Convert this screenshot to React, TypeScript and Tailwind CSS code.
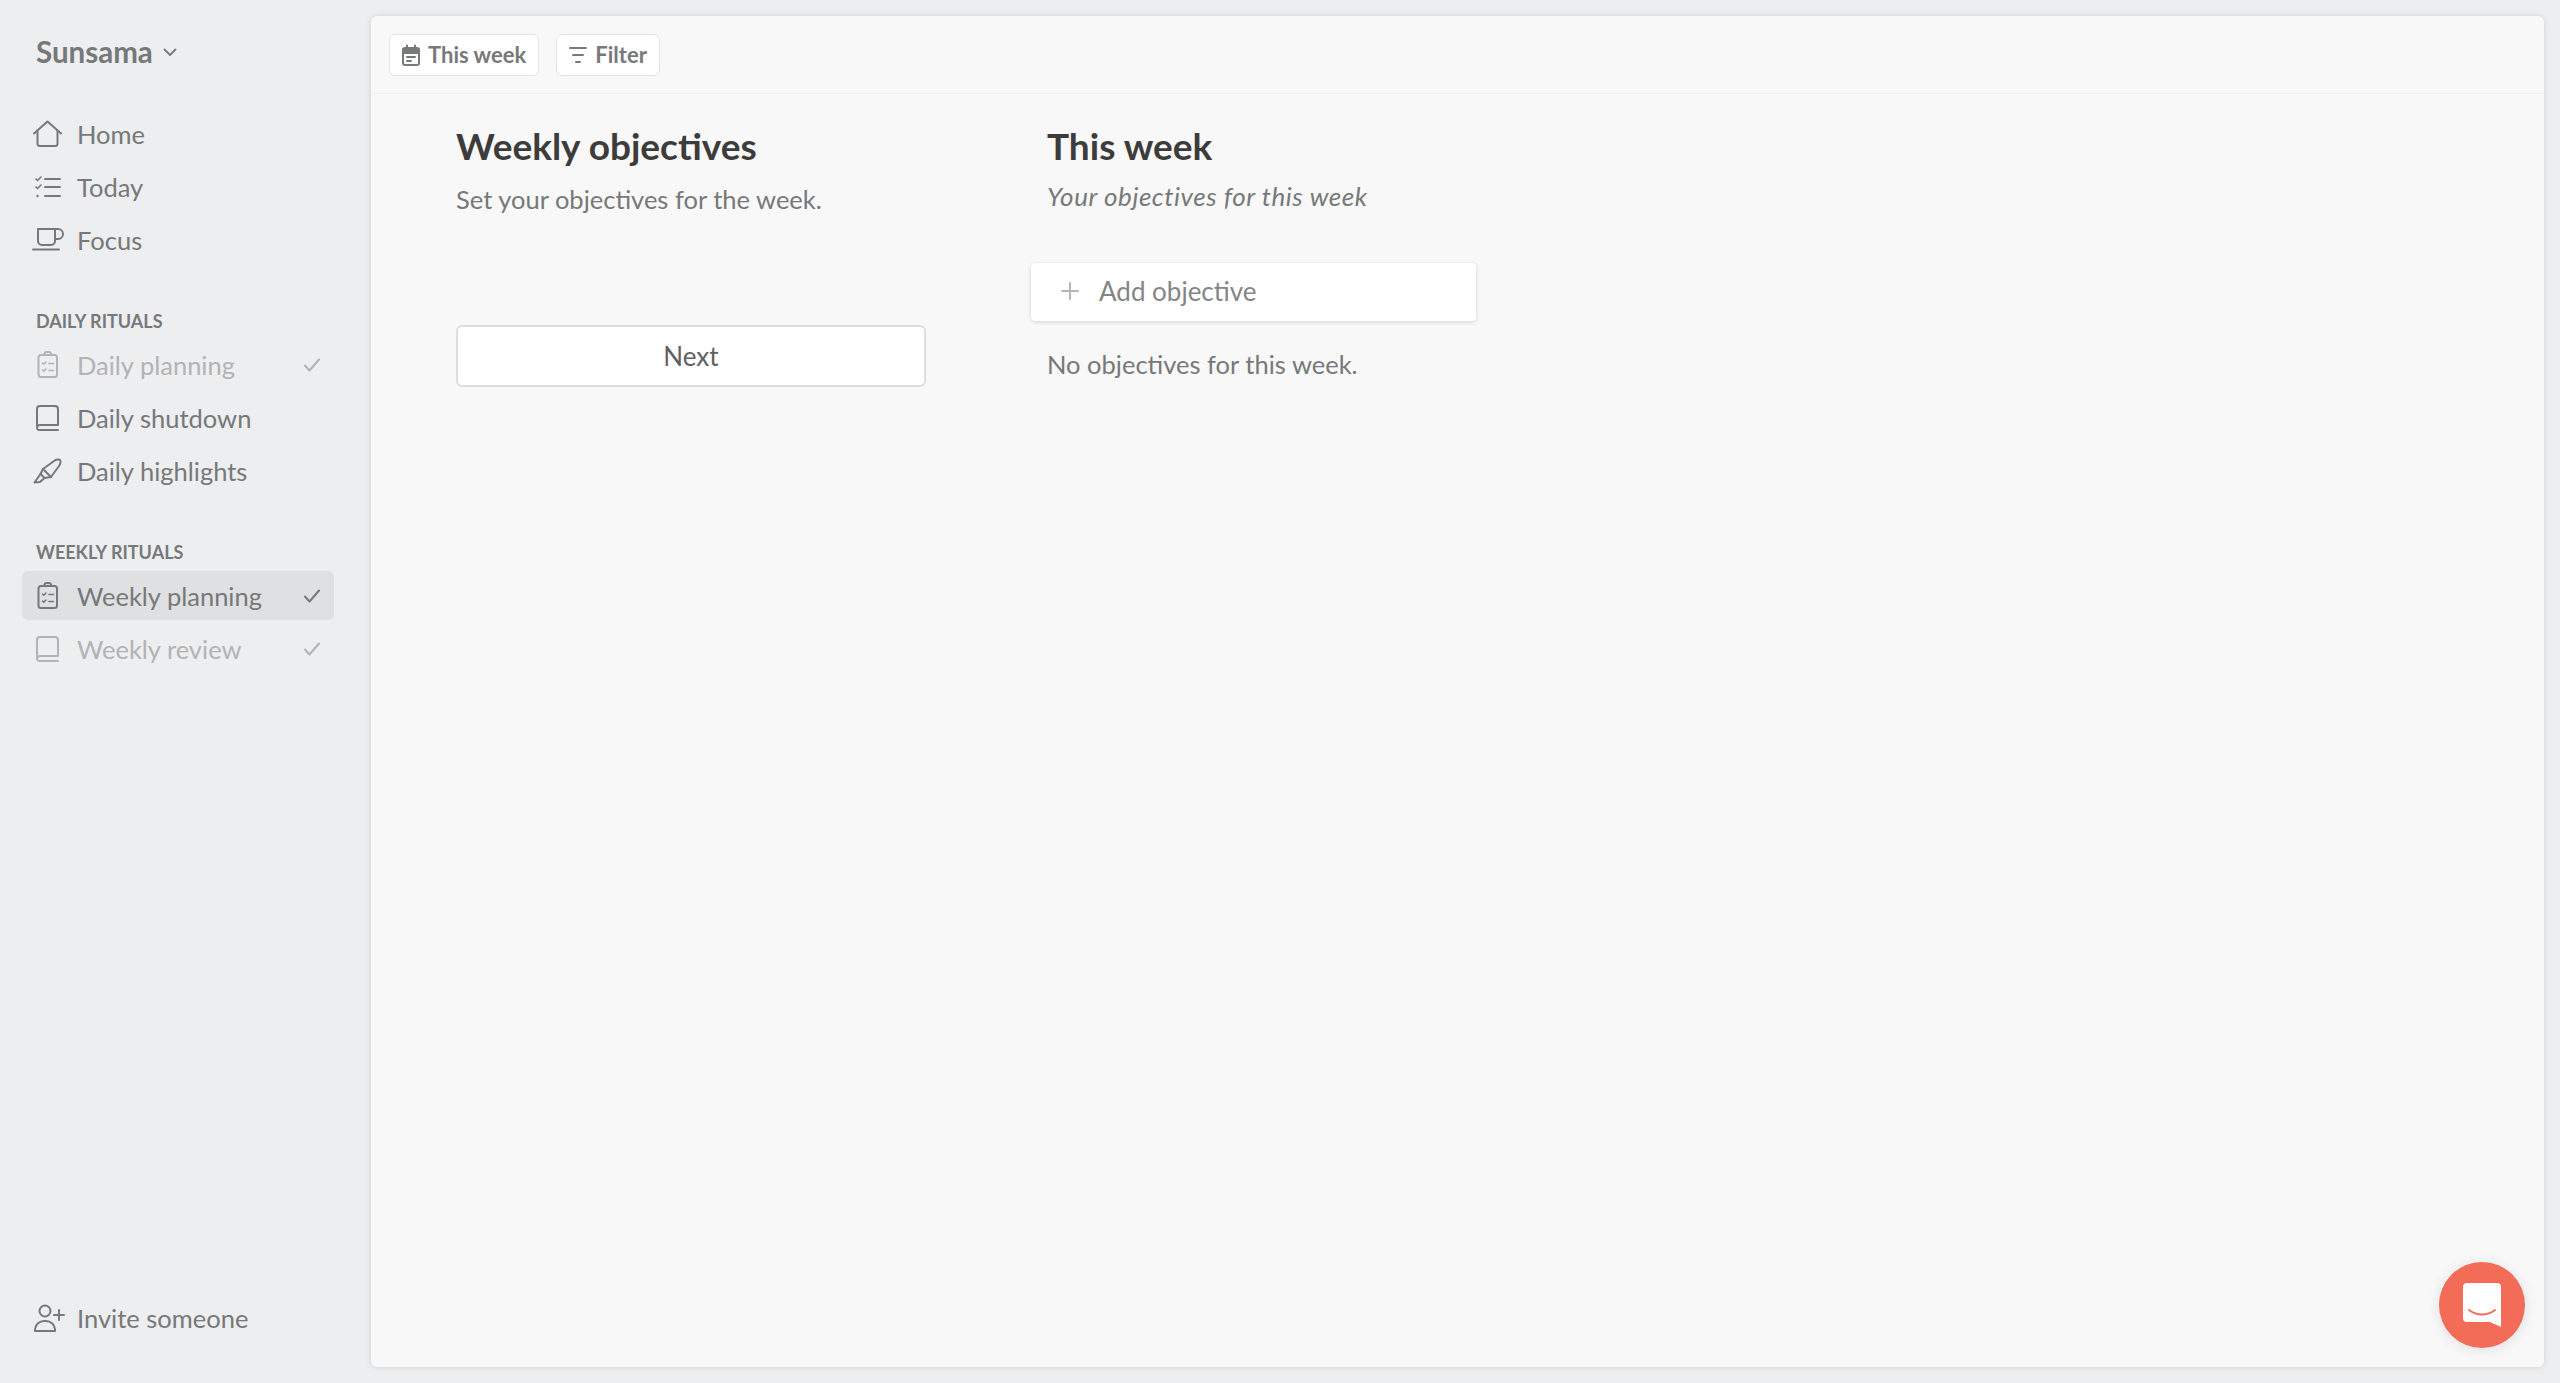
import { ReactNode } from "react";

const font = { fontFamily: '"Lato", "Open Sans", sans-serif' };

function Svg({ children, className = "h-[30px] w-[30px]" }: { children: ReactNode; className?: string }) {
  return (
    <svg
      viewBox="0 0 30 30"
      fill="none"
      stroke="currentColor"
      strokeWidth="2"
      strokeLinecap="round"
      strokeLinejoin="round"
      className={`shrink-0 overflow-visible ${className}`}
    >
      {children}
    </svg>
  );
}

const HomeIcon = () => (
  <Svg>
    <path d="M1 14.500 14.500 2.500 28 14.500" />
    <path d="M4.500 11.500v13a2.500 2.500 0 0 0 2.500 2.500h15a2.500 2.500 0 0 0 2.500-2.500v-13" />
  </Svg>
);

const TodayIcon = () => (
  <Svg>
    <path d="M3 7l1.500 1.500L8 5M3 15l1.500 1.500L8 13" strokeWidth="1.600" />
    <path d="M12 7h15M12 15h15M12 24h15" />
    <circle cx="4.500" cy="24" r="1.200" fill="currentColor" stroke="none" />
  </Svg>
);

const FocusIcon = () => (
  <Svg>
    <path d="M5 4h17v12a4 4 0 0 1-4 4H9a4 4 0 0 1-4-4z" />
    <path d="M22 4h3a4.500 4.500 0 0 1 0 10h-3" />
    <path d="M0 24.500h26" />
  </Svg>
);

const ClipboardIcon = () => (
  <Svg>
    <rect x="5.500" y="5" width="18.500" height="22" rx="2.500" />
    <path d="M11.500 5V3.500a2 2 0 0 1 2-1.500h2.500a2 2 0 0 1 2 1.500V5" />
    <path d="M9.500 13l1.300 1.300L13 12M9.500 20l1.300 1.300L13 19M16 13.500h4.500M16 20.500h4.500" strokeWidth="1.600" />
  </Svg>
);

const BookIcon = () => (
  <Svg>
    <path d="M4 23V6a3 3 0 0 1 3-3h15a3 3 0 0 1 3 3v16H7a3 3 0 0 0-3 2.500A2.500 2.500 0 0 0 7 27h18" />
  </Svg>
);

const MarkerIcon = () => (
  <Svg>
    <path d="M10 13 21 5c2-1.500 5-2 6-1s.5 4-1 6l-8 11z" />
    <path d="M10 13l-2.500 5 4 4 6.500-1" />
    <path d="M7.500 18 1.500 26.500l5.500-.5 4.500-4" />
  </Svg>
);

const Check = () => (
  <svg viewBox="0 0 16 14" fill="none" stroke="currentColor" strokeWidth="2" strokeLinecap="round" strokeLinejoin="round" className="h-[14px] w-[16px] shrink-0">
    <path d="M1 7.500 5.500 12.500 15 1.500" />
  </svg>
);

const InviteIcon = () => (
  <Svg className="h-[30px] w-[32px]">
    <circle cx="11" cy="8" r="5.500" />
    <path d="M1 28v-2a9 9 0 0 1 9-8h2a9 9 0 0 1 9 8v2z" />
    <path d="M25 7v10M20 12h10" />
  </Svg>
);

function NavItem({
  icon,
  label,
  done,
  faded,
  active,
}: {
  icon: ReactNode;
  label: string;
  done?: boolean;
  faded?: boolean;
  active?: boolean;
}) {
  return (
    <div
      className={`flex h-[49px] items-center rounded-[6px] pl-[11px] pr-[14px] ${active ? "bg-[#dfe0e1]" : ""} ${
        faded ? "text-[#b1b3b5]" : "text-[#767879]"
      }`}
    >
      <span className="flex w-[44px] shrink-0 items-center">{icon}</span>
      <span className="flex-1 text-[25.500px] leading-[32px]">{label}</span>
      {done && <Check />}
    </div>
  );
}

function SectionLabel({ children, className }: { children: ReactNode; className: string }) {
  return (
    <div className={`pl-[14px] text-[18px] font-bold uppercase leading-[22px] text-[#767879] ${className}`}>{children}</div>
  );
}

function Sidebar() {
  return (
    <aside className="flex w-[371px] shrink-0 flex-col pb-[25px] pl-[22px] pr-[37px] pt-[17px]">
      <div className="flex h-[38px] items-center gap-[10px] pl-[14px] text-[#767879]">
        <span className="text-[29.500px] font-bold leading-[38px]">Sunsama</span>
        <svg viewBox="0 0 14 9" fill="none" stroke="currentColor" strokeWidth="1.800" strokeLinecap="round" strokeLinejoin="round" className="h-[9px] w-[14px]">
          <path d="M1.500 1.500 7 7l5.500-5.500" />
        </svg>
      </div>
      <nav className="mt-[38px] flex flex-col gap-[4px]">
        <NavItem icon={<HomeIcon />} label="Home" />
        <NavItem icon={<TodayIcon />} label="Today" />
        <NavItem icon={<FocusIcon />} label="Focus" />
      </nav>
      <SectionLabel className="mt-[46px]">Daily rituals</SectionLabel>
      <div className="mt-[8px] flex flex-col gap-[4px]">
        <NavItem icon={<ClipboardIcon />} label="Daily planning" done faded />
        <NavItem icon={<BookIcon />} label="Daily shutdown" />
        <NavItem icon={<MarkerIcon />} label="Daily highlights" />
      </div>
      <SectionLabel className="mt-[46px]">Weekly rituals</SectionLabel>
      <div className="mt-[8px] flex flex-col gap-[4px]">
        <NavItem icon={<ClipboardIcon />} label="Weekly planning" done active />
        <NavItem icon={<BookIcon />} label="Weekly review" done faded />
      </div>
      <div className="mt-auto">
        <NavItem icon={<InviteIcon />} label="Invite someone" />
      </div>
    </aside>
  );
}

function ToolbarButton({ icon, label }: { icon: ReactNode; label: string }) {
  return (
    <button className="flex h-[42px] items-center gap-[8px] rounded-[6px] border border-[#e2e3e3] bg-white px-[12px] text-[22px] font-bold leading-none text-[#77797a]">
      {icon}
      {label}
    </button>
  );
}

function Main() {
  return (
    <main className="flex min-w-0 flex-1 flex-col rounded-[6px] bg-[#f8f8f8] shadow-[0_0_6px_rgba(0,0,0,0.12)]">
      <header className="flex h-[78px] shrink-0 items-center gap-[17px] border-b border-[#f0f1f1] pl-[18px]">
        <ToolbarButton
          label="This week"
          icon={
            <svg viewBox="0 0 18 22" fill="none" stroke="currentColor" strokeWidth="2" strokeLinecap="round" className="h-[22px] w-[18px]">
              <rect x="1" y="4" width="16" height="17" rx="2" />
              <path d="M1 5.500h16V9H1z" fill="currentColor" />
              <path d="M5 1.500V4M13 1.500V4M5 13h8M5 17h4" />
            </svg>
          }
        />
        <ToolbarButton
          label="Filter"
          icon={
            <svg viewBox="0 0 18 18" fill="none" stroke="currentColor" strokeWidth="2" strokeLinecap="round" className="h-[18px] w-[18px]">
              <path d="M1 2h16M4 9h10M7 16h4" />
            </svg>
          }
        />
      </header>
      <div className="flex pl-[85px] pt-[29px]">
        <section className="w-[470px] shrink-0">
          <h1 className="text-[37px] font-bold leading-[46px] text-[#3c3c3a]">Weekly objectives</h1>
          <p className="mt-[12px] text-[25.500px] leading-[36px] text-[#767879]">Set your objectives for the week.</p>
          <button className="mt-[108px] flex h-[62px] w-full items-center justify-center rounded-[6px] border-2 border-[#dcdddd] bg-white text-[26px] text-[#5f6061]">
            Next
          </button>
        </section>
        <section className="ml-[105px] w-[445px] shrink-0">
          <h2 className="pl-[16px] text-[37px] font-bold leading-[46px] text-[#3c3c3a]">This week</h2>
          <p className="mt-[9px] pl-[16px] text-[26px] italic leading-[36px] tracking-[0.55px] text-[#767879]">Your objectives for this week</p>
          <div className="mt-[49px] flex h-[58px] items-center rounded-[4px] bg-white pb-[2px] pl-[30px] text-[26px] text-[#848586] shadow-[0_1px_4px_rgba(0,0,0,0.14)]">
            <svg viewBox="0 0 18 18" fill="none" stroke="#b5b6b7" strokeWidth="2" strokeLinecap="round" className="mr-[20px] h-[18px] w-[18px]">
              <path d="M9 1v16M1 9h16" />
            </svg>
            Add objective
          </div>
          <p className="mt-[25px] pl-[16px] text-[25.500px] leading-[36px] text-[#767879]">No objectives for this week.</p>
        </section>
      </div>
    </main>
  );
}

export default function App() {
  return (
    <div style={font} className="relative flex h-[1383px] w-[2560px] overflow-hidden bg-[#edeef0] pb-[16px] pr-[16px] pt-[16px]">
      <Sidebar />
      <Main />
      <button className="absolute left-[2439px] top-[1262px] flex h-[86px] w-[86px] items-center justify-center rounded-full bg-[#f36c58] shadow-[0_2px_14px_rgba(0,0,0,0.1)]">
        <svg viewBox="0 0 38 44" className="h-[44px] w-[38px]">
          <path d="M4 0h30a4 4 0 0 1 4 4v40l-11-5H4a4 4 0 0 1-4-4V4a4 4 0 0 1 4-4z" fill="#fff" />
          <path d="M6 27c8 6 18 6 26 0" fill="none" stroke="#f36c58" strokeWidth="2" strokeLinecap="round" />
        </svg>
      </button>
    </div>
  );
}
